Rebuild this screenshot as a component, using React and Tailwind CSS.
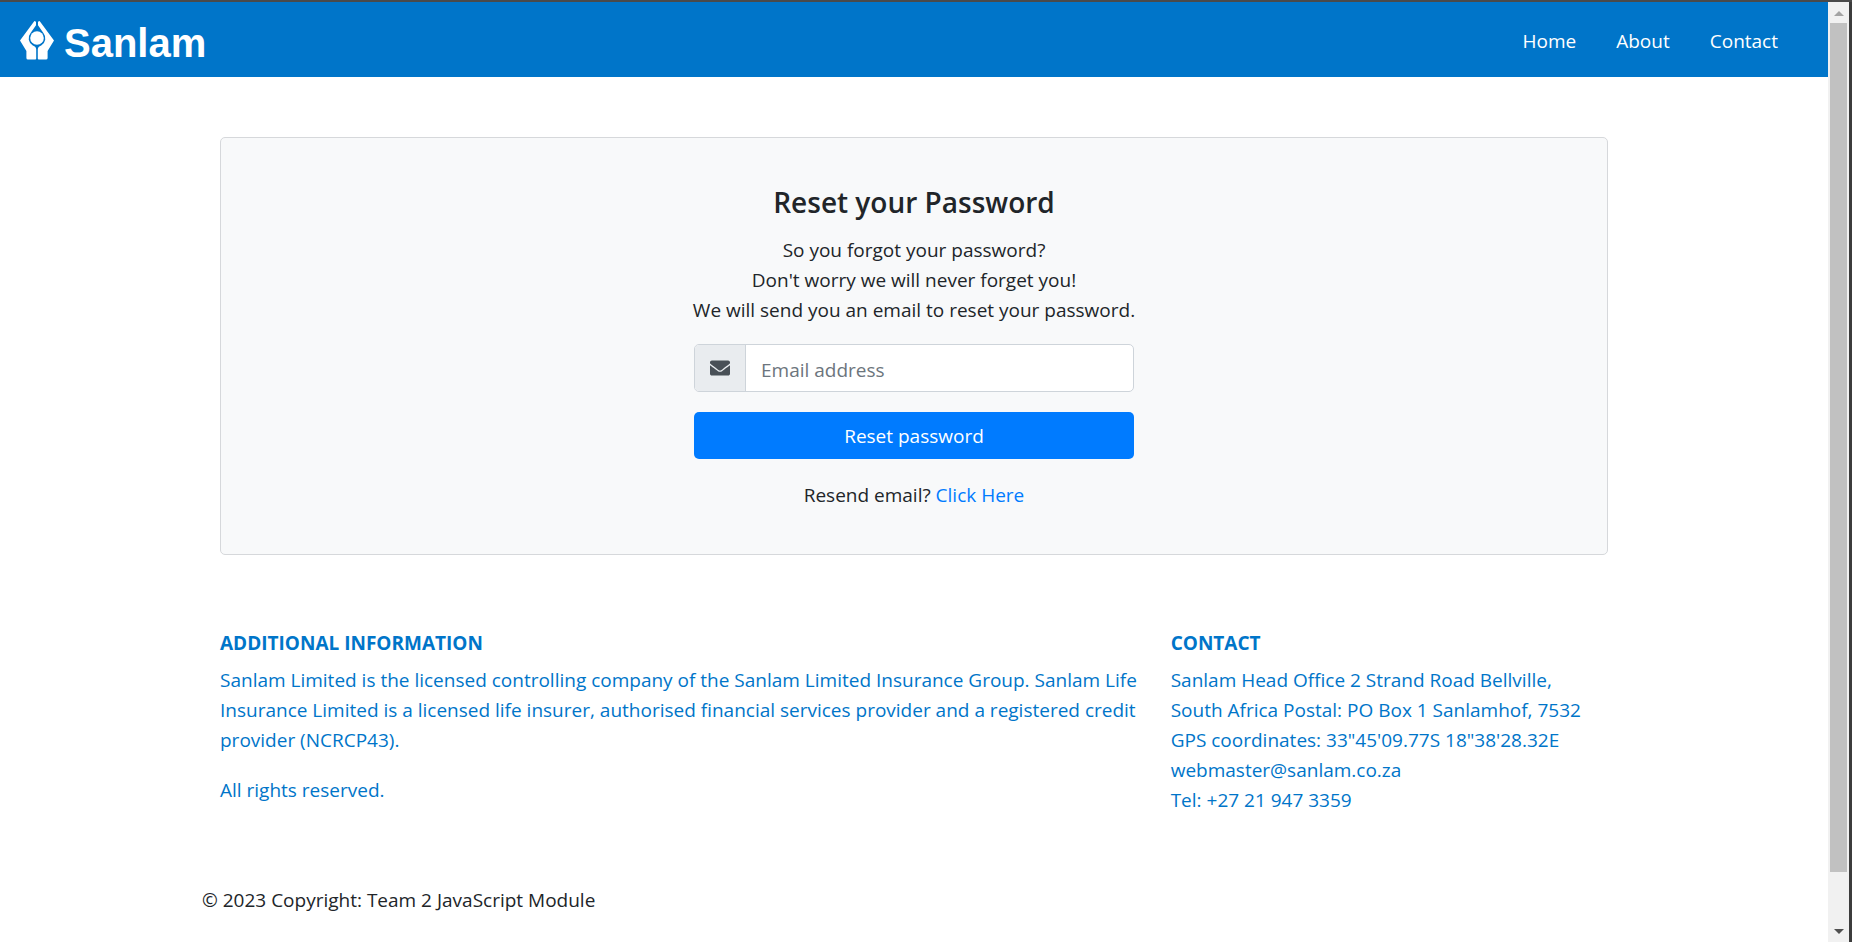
import { FaEnvelope } from "react-icons/fa";

function LogoMark() {
  return (
    <svg viewBox="0 0 34 40" className="h-10 w-[34px]" fill="currentColor" aria-hidden="true">
      <path d="M14.4 1 L16 1.8 V5.2 L10.6 13 A8.4 8.4 0 0 0 12.8 25.6 Q16.2 26.8 16.2 29.5 V38.6 Q16.2 39.6 15.2 39.6 H8 Q6.4 39.6 6.4 38 V31 L0 20.5 Z" />
      <path d="M19.6 1 L18 1.8 V5.2 L23.4 13 A8.4 8.4 0 0 1 21.2 25.6 Q17.8 26.8 17.8 29.5 V38.6 Q17.8 39.6 18.8 39.6 H26 Q27.6 39.6 27.6 38 V31 L34 20.5 Z" />
      <circle cx="17" cy="18" r="6.8" />
    </svg>
  );
}

const navLinks = ["Home", "About", "Contact"];

function Header() {
  return (
    <header className="flex h-[75px] items-center justify-between bg-[#0075c9] pr-[50px] pl-5 text-white">
      <a href="#home" className="flex items-center gap-2.5">
        <LogoMark />
        <span className="pt-1.5 font-['Liberation_Sans',sans-serif] text-[40px] leading-10 font-bold">Sanlam</span>
      </a>
      <nav className="flex gap-10 pt-0.5">
        {navLinks.map((label) => (
          <a key={label} href={`#${label.toLowerCase()}`}>
            {label}
          </a>
        ))}
      </nav>
    </header>
  );
}

function ResetCard() {
  return (
    <section className="flex justify-center rounded-[5px] border border-[#d6d8db] bg-[#f8f9fa] pt-[46px] pb-[44px]">
      <form className="w-[440px] text-center" onSubmit={(e) => e.preventDefault()}>
        <h1 className="text-[28px] leading-9 font-semibold">Reset your Password</h1>
        <p className="-mx-2 mt-[15px]">
          So you forgot your password?
          <br />
          Don't worry we will never forget you!
          <br />
          We will send you an email to reset your password.
        </p>
        <div className="mt-[19px] flex h-12 overflow-hidden rounded-[5px] border border-[#ced4da] bg-white">
          <label
            htmlFor="email"
            className="flex w-[51px] items-center justify-center border-r border-[#ced4da] bg-[#e9ecef] text-[#495057]"
          >
            <FaEnvelope size={20} title="Email address" />
          </label>
          <input
            id="email"
            type="email"
            placeholder="Email address"
            className="min-w-0 flex-1 px-[15px] pt-1 outline-none placeholder:text-[#6c757d]"
          />
        </div>
        <button type="submit" className="mt-5 h-[47px] w-full rounded-[5px] bg-[#007bff] text-white">
          Reset password
        </button>
        <p className="mt-[21px]">
          Resend email?{" "}
          <a href="#resend" className="text-[#007bff]">
            Click Here
          </a>
        </p>
      </form>
    </section>
  );
}

function Footer() {
  return (
    <footer>
      <div className="-mx-[19px] mt-[76px] grid grid-cols-[2fr_1fr] text-[#0075c9]">
        <section className="pr-2.5 pl-[19px]">
          <h2 className="leading-6 font-bold">ADDITIONAL INFORMATION</h2>
          <p className="mt-[10px]">
            Sanlam Limited is the licensed controlling company of the Sanlam Limited Insurance Group. Sanlam Life
            Insurance Limited is a licensed life insurer, authorised financial services provider and a registered
            credit provider (NCRCP43).
          </p>
          <p className="mt-5">All rights reserved.</p>
        </section>
        <section className="pl-[19px]">
          <h2 className="leading-6 font-bold">CONTACT</h2>
          <address className="mt-[10px] not-italic">
            Sanlam Head Office 2 Strand Road Bellville,
            <br />
            South Africa Postal: PO Box 1 Sanlamhof, 7532
            <br />
            GPS coordinates: 33"45'09.77S 18"38'28.32E
            <br />
            webmaster@sanlam.co.za
            <br />
            Tel: +27 21 947 3359
          </address>
        </section>
      </div>
      <p className="mt-[70px] -ml-[18px]">© 2023 Copyright: Team 2 JavaScript Module</p>
    </footer>
  );
}

function ScrollBar() {
  return (
    <div
      className="flex w-6 shrink-0 flex-col items-center border-r-3 border-[#3c3c3c] bg-[#f1f1f1] py-2"
      aria-hidden="true"
    >
      <svg viewBox="0 0 10 5" className="mt-px h-[5px] w-[10px] fill-[#a3a3a3]">
        <path d="M5 0 L10 5 H0 Z" />
      </svg>
      <div className="mt-[7px] mb-[57px] w-[17px] flex-1 bg-[#c1c1c1]" />
      <svg viewBox="0 0 10 5" className="h-[5px] w-[10px] fill-[#505050]">
        <path d="M0 0 H10 L5 5 Z" />
      </svg>
    </div>
  );
}

export default function App() {
  return (
    <div className="flex min-h-screen flex-col border-t-2 border-[#4a4a4a] bg-white font-['Open_Sans','Noto_Sans',sans-serif] text-[19px] leading-[30px] text-[#212529]">
      <div className="flex flex-1">
        <div className="min-w-0 flex-1">
          <Header />
          <main className="mx-auto max-w-[1426px] px-[19px] pt-[60px]">
            <ResetCard />
            <Footer />
          </main>
        </div>
        <ScrollBar />
      </div>
    </div>
  );
}
